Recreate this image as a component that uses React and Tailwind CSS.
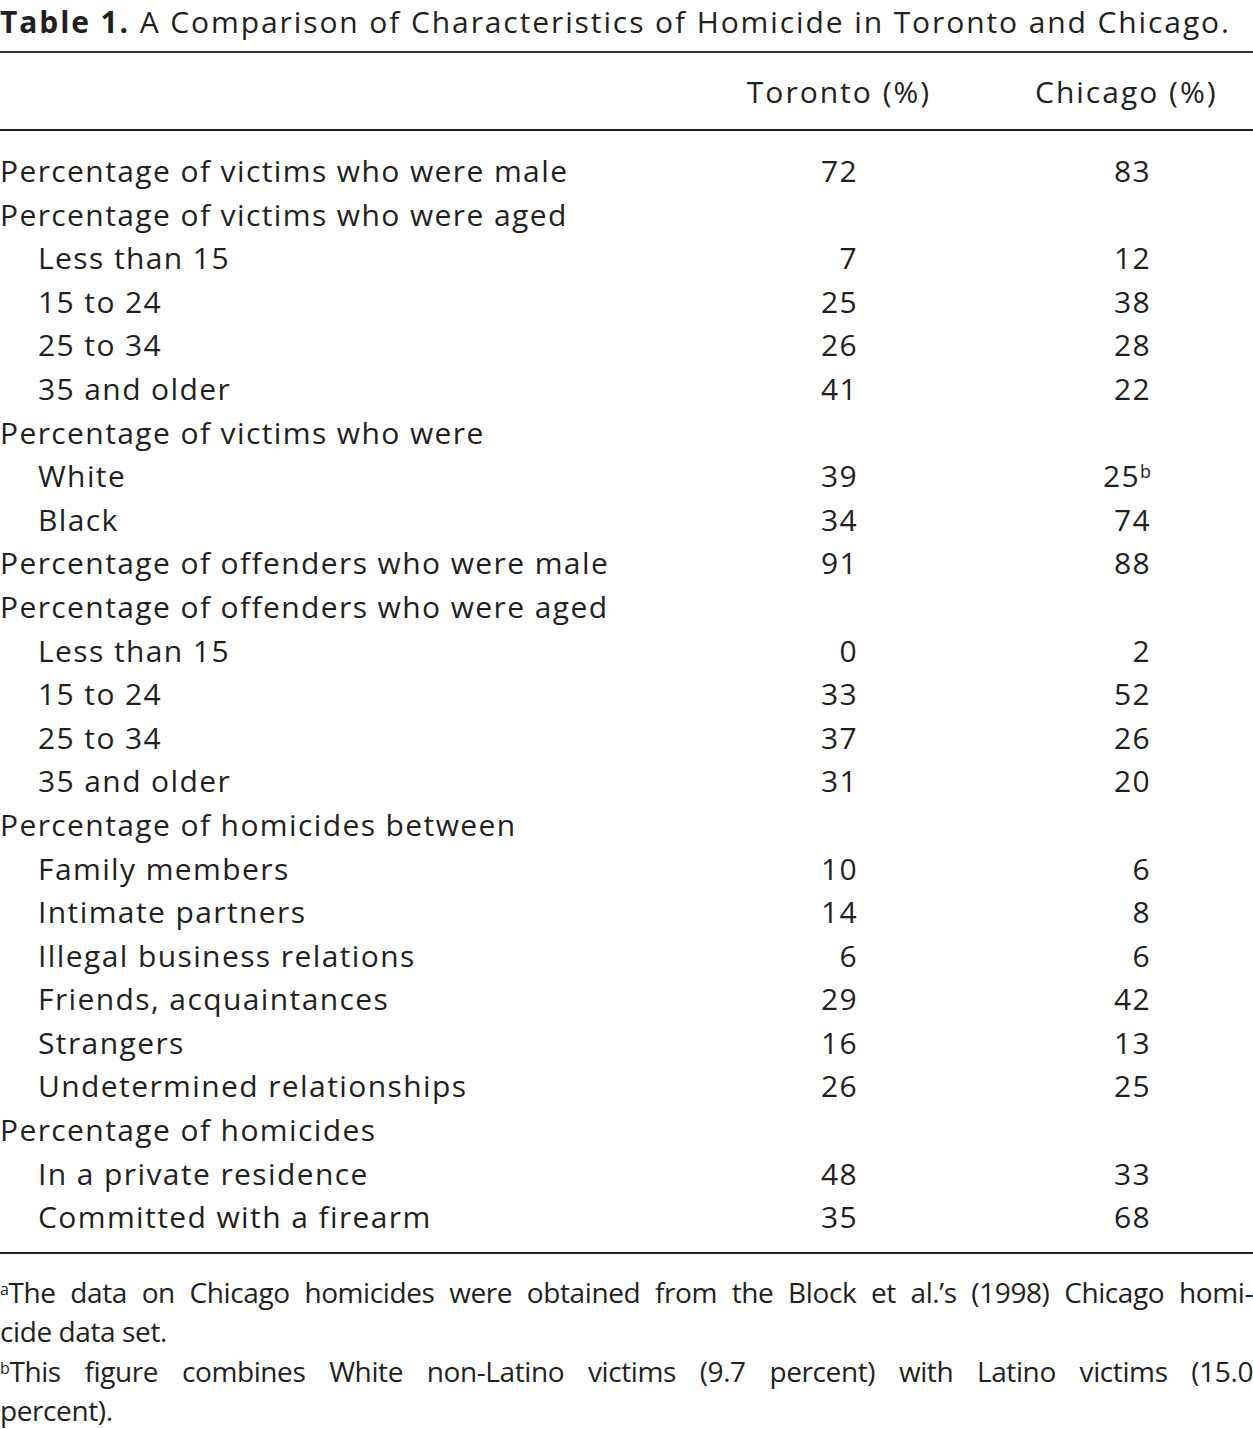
const rows = [
  { label: 'Percentage of victims who were male', t: '72', c: '83' },
  { label: 'Percentage of victims who were aged' },
  { label: 'Less than 15', t: '7', c: '12', sub: true },
  { label: '15 to 24', t: '25', c: '38', sub: true },
  { label: '25 to 34', t: '26', c: '28', sub: true },
  { label: '35 and older', t: '41', c: '22', sub: true },
  { label: 'Percentage of victims who were' },
  { label: 'White', t: '39', c: '25', note: 'b', sub: true },
  { label: 'Black', t: '34', c: '74', sub: true },
  { label: 'Percentage of offenders who were male', t: '91', c: '88' },
  { label: 'Percentage of offenders who were aged' },
  { label: 'Less than 15', t: '0', c: '2', sub: true },
  { label: '15 to 24', t: '33', c: '52', sub: true },
  { label: '25 to 34', t: '37', c: '26', sub: true },
  { label: '35 and older', t: '31', c: '20', sub: true },
  { label: 'Percentage of homicides between' },
  { label: 'Family members', t: '10', c: '6', sub: true },
  { label: 'Intimate partners', t: '14', c: '8', sub: true },
  { label: 'Illegal business relations', t: '6', c: '6', sub: true },
  { label: 'Friends, acquaintances', t: '29', c: '42', sub: true },
  { label: 'Strangers', t: '16', c: '13', sub: true },
  { label: 'Undetermined relationships', t: '26', c: '25', sub: true },
  { label: 'Percentage of homicides' },
  { label: 'In a private residence', t: '48', c: '33', sub: true },
  { label: 'Committed with a firearm', t: '35', c: '68', sub: true },
];

const Row = ({ row }) => (
  <div className="flex leading-[43.6px]">
    <div className={`flex-1 whitespace-nowrap ${row.sub ? 'pl-[38px]' : ''}`}>{row.label}</div>
    <div className="w-[190px] text-right pr-[76px]">{row.t}</div>
    <div className="w-[101px]" />
    <div className="w-[182px] text-right pr-[66px] whitespace-nowrap">
      {row.c}
      {row.note && <sup className="text-[18px] leading-none tracking-normal">{row.note}</sup>}
    </div>
    <div className="w-[36px]" />
  </div>
);

export default function App() {
  return (
    <div className="w-[1253px] h-[1429px] bg-white text-[#231f20] font-['Open_Sans',sans-serif] text-[30px] tracking-[1.4px] overflow-hidden">
      <div className="leading-[44px] whitespace-nowrap tracking-[1.9px]">
        <span className="font-bold">Table 1.</span> A Comparison of Characteristics of Homicide in Toronto and Chicago.
      </div>
      <div className="h-[2px] bg-[#3a3637] mt-[7px]" />
      <div className="flex items-center h-[76px] tracking-[2px]">
        <div className="flex-1" />
        <div className="w-[190px] text-center whitespace-nowrap">Toronto (%)</div>
        <div className="w-[101px]" />
        <div className="w-[182px] text-center whitespace-nowrap">Chicago (%)</div>
        <div className="w-[36px]" />
      </div>
      <div className="h-[2px] bg-[#231f20]" />
      <div className="pt-[18px] pb-[13px]">
        {rows.map((r, i) => (
          <Row key={i} row={r} />
        ))}
      </div>
      <div className="h-[2px] bg-[#231f20]" />
      <div className="pt-[19px] text-[28px] leading-[39.5px] tracking-[-0.4px]">
        <div className="text-justify [text-align-last:justify] whitespace-nowrap">
          <sup className="text-[16px]">a</sup>The data on Chicago homicides were obtained from the Block et al.’s (1998) Chicago homi-
        </div>
        <div>cide data set.</div>
        <div className="text-justify [text-align-last:justify]">
          <sup className="text-[16px]">b</sup>This figure combines White non-Latino victims (9.7 percent) with Latino victims (15.0
        </div>
        <div>percent).</div>
      </div>
    </div>
  );
}
